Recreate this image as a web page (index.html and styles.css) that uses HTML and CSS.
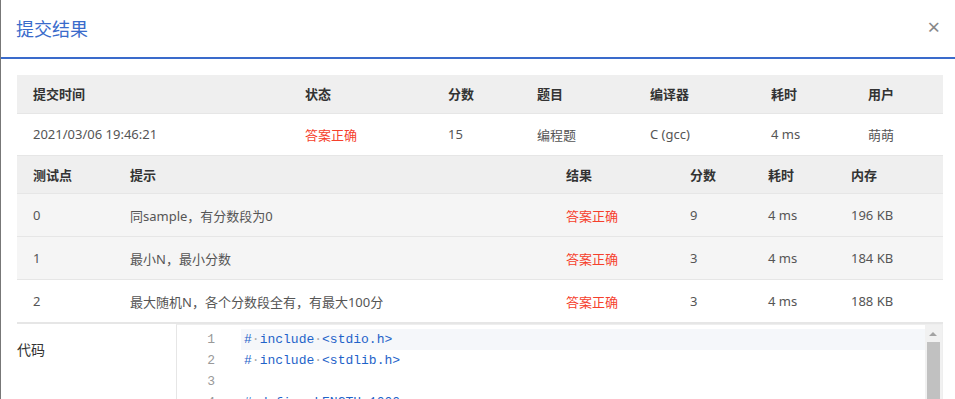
FILE: index.html
```html
<!DOCTYPE html>
<html lang="zh-CN">
<head>
  <meta charset="UTF-8" />
  <title>提交结果</title>
  <link rel="stylesheet" href="styles.css">
</head>
<body>
  <div class="dialog">
    <div class="dialog-header">
      <h2>提交结果</h2>
      <span class="close">&times;</span>
    </div>

    <div class="dialog-body">
      <table class="grid summary">
        <colgroup>
          <col style="width:272px"><col style="width:143px"><col style="width:89px">
          <col style="width:113px"><col style="width:121px"><col style="width:97px"><col style="width:91px">
        </colgroup>
        <thead>
          <tr><th>提交时间</th><th>状态</th><th>分数</th><th>题目</th><th>编译器</th><th>耗时</th><th>用户</th></tr>
        </thead>
        <tbody>
          <tr class="white">
            <td>2021/03/06 19:46:21</td><td class="ok">答案正确</td><td>15</td><td>编程题</td><td>C (gcc)</td><td>4 ms</td><td>萌萌</td>
          </tr>
        </tbody>
      </table>

      <table class="grid cases">
        <colgroup>
          <col style="width:97px"><col style="width:436px"><col style="width:124px">
          <col style="width:78px"><col style="width:83px"><col style="width:108px">
        </colgroup>
        <thead>
          <tr><th>测试点</th><th>提示</th><th>结果</th><th>分数</th><th>耗时</th><th>内存</th></tr>
        </thead>
        <tbody>
          <tr class="grey"><td>0</td><td>同sample，有分数段为0</td><td class="ok">答案正确</td><td>9</td><td>4 ms</td><td>196 KB</td></tr>
          <tr class="grey"><td>1</td><td>最小N，最小分数</td><td class="ok">答案正确</td><td>3</td><td>4 ms</td><td>184 KB</td></tr>
          <tr class="white"><td>2</td><td>最大随机N，各个分数段全有，有最大100分</td><td class="ok">答案正确</td><td>3</td><td>4 ms</td><td>188 KB</td></tr>
        </tbody>
      </table>

      <div class="code-row">
        <div class="code-label">代码</div>
        <div class="editor">
          <div class="lines">
            <div class="line active"><span class="num">1</span><code>#<i>·</i>include<i>·</i>&lt;stdio.h&gt;</code></div>
            <div class="line"><span class="num">2</span><code>#<i>·</i>include<i>·</i>&lt;stdlib.h&gt;</code></div>
            <div class="line"><span class="num">3</span><code></code></div>
            <div class="line"><span class="num">4</span><code>#<i>·</i>define<i>·</i>LENGTH<i>·</i>1000</code></div>
            <div class="line"><span class="num">5</span><code></code></div>
          </div>
          <div class="scrollbar">
            <span class="arrow"></span>
            <span class="thumb"></span>
          </div>
        </div>
      </div>
    </div>
  </div>
</body>
</html>
```

FILE: styles.css
```css
:root {
  --blue: #3a6bcb;
  --red: #f5402c;
  --text: #555;
  --head: #333;
  --line: #e6e6e6;
  --head-bg: #efefef;
  --row-bg: #f5f5f5;
}

* {
  box-sizing: border-box;
}

html, body {
  overflow: hidden;
}

body {
  margin: 0;
  background: #fff;
  font-family: "Noto Sans", "Noto Sans CJK SC", sans-serif;
  font-size: 13px;
  color: var(--text);
}

.dialog {
  height: 399px;
  border-left: 1px solid #777;
}

.dialog-header {
  display: flex;
  align-items: center;
  justify-content: space-between;
  height: 59px;
  padding: 0 15px 2px 15px;
  border-bottom: 2px solid var(--blue);
}

.dialog-header h2 {
  margin: 0;
  font-size: 18px;
  font-weight: normal;
  color: var(--blue);
}

.close {
  font-size: 22px;
  color: #888;
  line-height: 1;
  margin-top: -3px;
}

.dialog-body {
  padding: 16px 12px 0 16px;
}

.grid {
  width: 926px;
  table-layout: fixed;
  border-collapse: collapse;
}

.grid th,
.grid td {
  text-align: left;
  padding: 0 0 0 16px;
  white-space: nowrap;
  border-bottom: 1px solid var(--line);
}

.grid th {
  height: 38px;
  background: var(--head-bg);
  color: var(--head);
  font-weight: 600;
}

.grid td {
  height: 42px;
}

.cases td {
  height: 43px;
}

.grey td {
  background: var(--row-bg);
}

.white td {
  background: #fff;
}

.grid .ok {
  color: var(--red);
}

.code-row {
  display: flex;
  width: 926px;
  border-top: 1px solid var(--line);
}

.code-label {
  width: 159px;
  padding-top: 15px;
  font-size: 14px;
  color: #333;
}

.editor {
  flex: 1;
  display: flex;
  height: 80px;
  border-left: 1px solid var(--line);
  border-top: 1px solid #eee;
  border-right: 1px solid #eee;
}

.lines {
  flex: 1;
  padding-top: 4px;
  font-family: "Liberation Mono", monospace;
  font-size: 13px;
}

.line {
  display: flex;
  height: 21px;
  line-height: 21px;
}

.num {
  width: 38px;
  text-align: right;
  color: #999;
  flex-shrink: 0;
}

.line code {
  flex: 1;
  margin-left: 26px;
  padding-left: 3px;
  font-family: inherit;
  color: #1f63c9;
}

.line code i {
  font-style: normal;
  color: #aaa;
}

.line.active code {
  background: #f5f7fa;
}

.scrollbar {
  position: relative;
  width: 17px;
  background: #f1f1f1;
}

.arrow {
  position: absolute;
  top: 7px;
  left: 4px;
  border-left: 4px solid transparent;
  border-right: 4px solid transparent;
  border-bottom: 4px solid #a3a3a3;
}

.thumb {
  position: absolute;
  top: 17px;
  left: 2px;
  right: 2px;
  bottom: 0;
  background: #c1c1c1;
}
```
